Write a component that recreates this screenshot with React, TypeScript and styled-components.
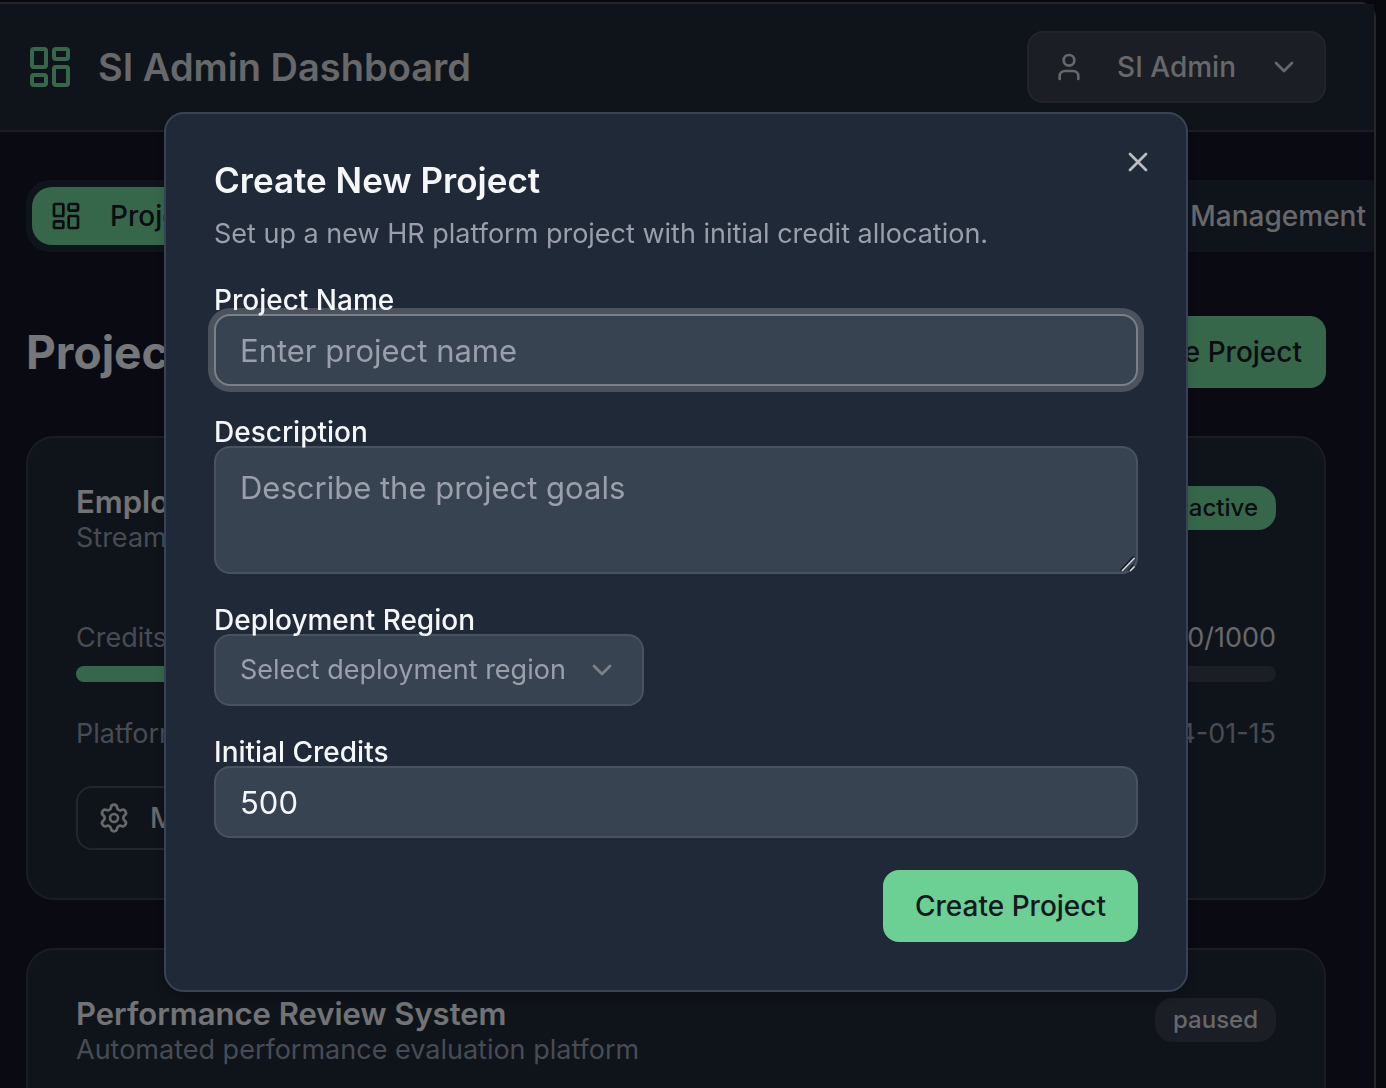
import React from "react";
import styled, { createGlobalStyle, css } from "styled-components";
import { ChevronDown, LayoutDashboard, Settings, User, X } from "lucide-react";

const GlobalStyle = createGlobalStyle`
  *, *::before, *::after { box-sizing: border-box; }
  body {
    margin: 0;
    background: #10101f;
    color: #ced0d4;
    font-family: Inter, "Liberation Sans", sans-serif;
    font-size: 27px;
    line-height: 40px;
    overflow: hidden;
  }
  button, input, textarea, select { font: inherit; color: inherit; }
  h1, h2, h3, p { margin: 0; }
  svg { flex-shrink: 0; display: block; }
`;

const Viewport = styled.div`
  height: 100vh;
  overflow: hidden;
  padding: 2px 10px 0 0;
`;

const Frame = styled.div`
  min-height: 100vh;
  border: solid #4c4c50;
  border-width: 2px 2px 0 0;
  border-top-right-radius: 16px;
  background: #141425;
`;

const Header = styled.header`
  display: flex;
  align-items: center;
  justify-content: space-between;
  height: 128px;
  padding: 0 48px 0 26px;
  background: #1e2734;
  border-bottom: 2px solid #363b44;
`;

const Brand = styled.div`
  display: flex;
  align-items: center;
  gap: 24px;
  color: #6ccf94;
`;

const AppTitle = styled.h1`
  font-size: 38px;
  line-height: 56px;
  font-weight: 600;
  color: #ced0d4;
`;

const UserButton = styled.button`
  display: flex;
  align-items: center;
  gap: 32px;
  height: 72px;
  padding: 0 24px;
  border: 2px solid #46494f;
  border-radius: 16px;
  background: #373d4a;
  color: #ced0d4;
  font-size: 28px;
  font-weight: 500;
`;

const TabList = styled.nav`
  display: flex;
  justify-content: space-between;
  height: 72px;
  margin: 48px 0 0 26px;
  padding: 7px 0 7px 6px;
  border-radius: 24px 0 0 24px;
  background: #1e2734;
`;

const Tab = styled.button<{ $active?: boolean }>`
  display: flex;
  align-items: center;
  gap: 28px;
  height: 58px;
  padding: 0 8px 0 18px;
  border: 0;
  border-radius: 20px;
  font-size: 28px;
  font-weight: 500;
  background: ${(p) => (p.$active ? "#6ccf94" : "transparent")};
  color: ${(p) => (p.$active ? "#16181f" : "#ced0d4")};
`;

const Main = styled.main`
  display: flex;
  flex-direction: column;
  gap: 48px;
  padding: 64px 48px 48px 26px;
`;

const PageHead = styled.div`
  display: flex;
  align-items: center;
  justify-content: space-between;
`;

const PageTitle = styled.h2`
  font-size: 46px;
  line-height: 64px;
  font-weight: 700;
  color: #eceef1;
`;

const PrimaryButton = styled.button<{ $wide?: boolean }>`
  height: 72px;
  padding: 0 ${(p) => (p.$wide ? 32 : 24)}px;
  border: 0;
  border-radius: 16px;
  background: #6ccf94;
  color: #16181f;
  font-size: 28px;
  font-weight: 500;
`;

const Card = styled.article`
  padding: 48px;
  border: 2px solid #343a45;
  border-radius: 28px;
  background: #1e2734;
`;

const CardHead = styled.div`
  display: flex;
  align-items: flex-start;
  justify-content: space-between;
  margin-bottom: 60px;
`;

const CardTitle = styled.h3`
  font-size: 31px;
  line-height: 32px;
  font-weight: 600;
  color: #e4e6ea;
`;

const Muted = styled.p`
  color: #8e98a8;
`;

const Badge = styled.span<{ $active?: boolean }>`
  padding: 0 18px;
  border-radius: 18px;
  font-size: 24px;
  line-height: 44px;
  font-weight: 500;
  background: ${(p) => (p.$active ? "#6ccf94" : "#373d4a")};
  color: ${(p) => (p.$active ? "#16181f" : "#ced0d4")};
`;

const Row = styled.div<{ $muted?: boolean }>`
  display: flex;
  justify-content: space-between;
  color: ${(p) => (p.$muted ? "#8e98a8" : "#ced0d4")};
`;

const Track = styled.div`
  height: 16px;
  margin: 8px 0 32px;
  border-radius: 8px;
  overflow: hidden;
  background: #373d4a;
`;

const Fill = styled.div`
  height: 100%;
  background: #6ccf94;
`;

const OutlineButton = styled.button`
  display: flex;
  align-items: center;
  gap: 20px;
  height: 64px;
  margin-top: 32px;
  padding: 0 20px;
  border: 2px solid #484b51;
  border-radius: 16px;
  background: transparent;
  color: #ced0d4;
  font-size: 28px;
  font-weight: 500;
`;

const Overlay = styled.div`
  position: fixed;
  inset: 0;
  display: grid;
  place-items: center;
  padding: 16px 34px 0 0;
  background: rgba(0, 0, 0, 0.5);
`;

const Dialog = styled.div`
  position: relative;
  width: min(1024px, 100%);
  padding: 48px;
  border: 2px solid #374354;
  border-radius: 20px;
  background: #202937;
  color: #f5f6f8;
  box-shadow: 0 8px 16px -4px rgba(0, 0, 0, 0.2);
`;

const CloseButton = styled.button`
  position: absolute;
  top: 32px;
  right: 32px;
  padding: 0;
  border: 0;
  background: transparent;
  color: #babdc2;
`;

const DialogTitle = styled.h2`
  margin-bottom: 16px;
  font-size: 35px;
  line-height: 36px;
  font-weight: 600;
`;

const DialogText = styled.p`
  color: #9a9fab;
`;

const Form = styled.form`
  display: flex;
  flex-direction: column;
  gap: 32px;
  margin-top: 32px;
`;

const Field = styled.div`
  display: flex;
  flex-direction: column;
  align-items: flex-start;
`;

const Label = styled.label`
  position: relative;
  z-index: 1;
  font-size: 28px;
  line-height: 28px;
  font-weight: 500;
`;

const control = css`
  display: block;
  border: 2px solid #49525e;
  border-radius: 16px;
  outline: none;
  background: #384352;
  &::placeholder { color: #9a9fab; opacity: 1; }
`;

const TextInput = styled.input<{ $highlighted?: boolean }>`
  ${control}
  width: 100%;
  height: 72px;
  padding: 0 24px;
  font-size: 31px;
  appearance: textfield;
  &::-webkit-inner-spin-button { appearance: none; }
  ${(p) =>
    p.$highlighted &&
    css`
      border-color: #7b7f86;
      box-shadow: 0 0 0 6px #4a525e;
    `}
`;

const AreaWrap = styled.div`
  position: relative;
  width: 100%;
`;

const TextArea = styled.textarea`
  ${control}
  width: 100%;
  height: 128px;
  padding: 16px 24px;
  font-size: 31px;
  line-height: 48px;
  resize: vertical;
  &::-webkit-resizer { background: transparent; }
`;

const ResizeGrip = styled.svg`
  position: absolute;
  right: 2px;
  bottom: 2px;
  pointer-events: none;
`;

const SelectWrap = styled.div`
  display: grid;
  align-items: center;
  width: 430px;
  max-width: 100%;
  > * { grid-area: 1 / 1; }
  > svg {
    justify-self: end;
    margin-right: 26px;
    color: #7d8289;
    pointer-events: none;
  }
`;

const Select = styled.select`
  ${control}
  width: 100%;
  height: 72px;
  padding: 0 60px 0 24px;
  appearance: none;
  color: #9a9fab;
`;

const Actions = styled.div`
  display: flex;
  justify-content: flex-end;
`;

export default function App() {
  return (
    <>
      <GlobalStyle />
      <Viewport>
        <Frame>
          <Header>
            <Brand>
              <LayoutDashboard size={48} />
              <AppTitle>SI Admin Dashboard</AppTitle>
            </Brand>
            <UserButton type="button">
              <User size={32} />
              SI Admin
              <ChevronDown size={32} />
            </UserButton>
          </Header>
          <TabList>
            <Tab type="button" $active>
              <LayoutDashboard size={32} />
              Projects
            </Tab>
            <Tab type="button">Credit Management</Tab>
          </TabList>
          <Main>
            <PageHead>
              <PageTitle>Projects</PageTitle>
              <PrimaryButton type="button">Create Project</PrimaryButton>
            </PageHead>
            <Card>
              <CardHead>
                <div>
                  <CardTitle>Employee Onboarding</CardTitle>
                  <Muted>Streamlined onboarding platform</Muted>
                </div>
                <Badge $active>active</Badge>
              </CardHead>
              <Row>
                <Muted>Credits Used</Muted>
                <span>750/1000</span>
              </Row>
              <Track>
                <Fill style={{ width: `${(750 / 1000) * 100}%` }} />
              </Track>
              <Row $muted>
                <span>Platform</span>
                <span>2024-01-15</span>
              </Row>
              <OutlineButton type="button">
                <Settings size={32} />
                Manage
              </OutlineButton>
            </Card>
            <Card>
              <CardHead>
                <div>
                  <CardTitle>Performance Review System</CardTitle>
                  <Muted>Automated performance evaluation platform</Muted>
                </div>
                <Badge>paused</Badge>
              </CardHead>
            </Card>
          </Main>
        </Frame>
      </Viewport>
      <Overlay>
        <Dialog role="dialog" aria-modal="true" aria-labelledby="dialog-title">
          <CloseButton type="button" aria-label="Close">
            <X size={32} />
          </CloseButton>
          <DialogTitle id="dialog-title">Create New Project</DialogTitle>
          <DialogText>Set up a new HR platform project with initial credit allocation.</DialogText>
          <Form onSubmit={(e) => e.preventDefault()}>
            <Field>
              <Label htmlFor="name">Project Name</Label>
              <TextInput id="name" placeholder="Enter project name" $highlighted />
            </Field>
            <Field>
              <Label htmlFor="description">Description</Label>
              <AreaWrap>
                <TextArea id="description" placeholder="Describe the project goals" />
                <ResizeGrip width="16" height="16" viewBox="0 0 16 16" aria-hidden="true">
                  <path d="M0.5 14.5 13.5 0.5M8.5 14.5 13.5 9" stroke="#14181f" strokeWidth="1.5" />
                  <path d="M2 15 14.5 2M10 15 14.5 10.5" stroke="#d3d6da" strokeWidth="1.5" />
                </ResizeGrip>
              </AreaWrap>
            </Field>
            <Field>
              <Label htmlFor="region">Deployment Region</Label>
              <SelectWrap>
                <Select id="region" defaultValue="">
                  <option value="">Select deployment region</option>
                </Select>
                <ChevronDown size={32} />
              </SelectWrap>
            </Field>
            <Field>
              <Label htmlFor="credits">Initial Credits</Label>
              <TextInput id="credits" type="number" defaultValue={500} />
            </Field>
            <Actions>
              <PrimaryButton type="submit" $wide>
                Create Project
              </PrimaryButton>
            </Actions>
          </Form>
        </Dialog>
      </Overlay>
    </>
  );
}
